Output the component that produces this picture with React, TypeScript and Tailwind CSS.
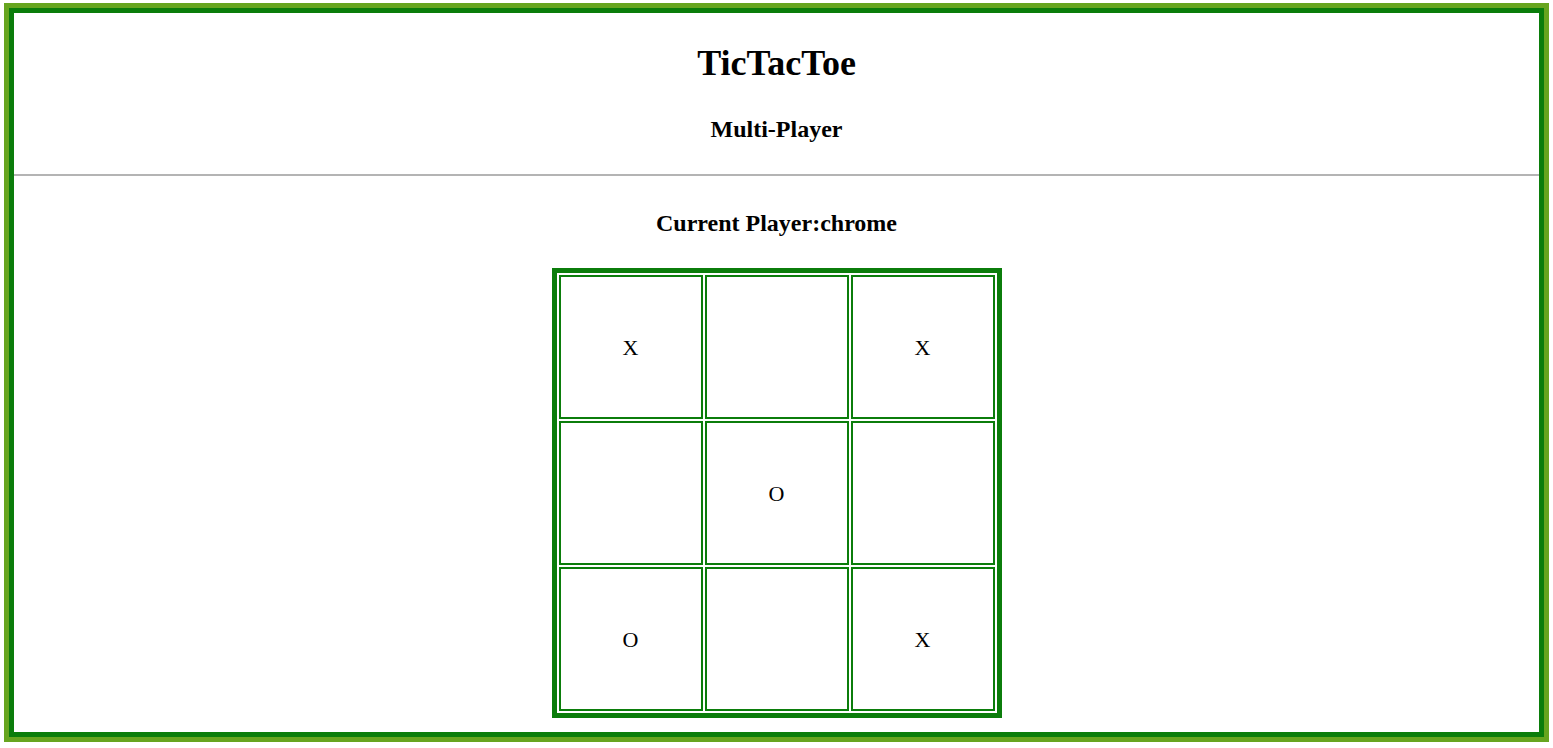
import React from 'react';

const board: string[] = ['X', '', 'X', '', 'O', '', 'O', '', 'X'];

function Cell({ value }: { value: string }) {
  return (
    <div className="flex h-[144px] w-[144px] items-center justify-center border-2 border-[#0b7d0b] text-[22px] text-black">
      {value}
    </div>
  );
}

export default function App() {
  return (
    <div className="min-h-[748px] bg-white pt-[3px] pr-[4px] pb-[6px] pl-[4px] font-['Liberation_Serif',serif] text-black">
      <div className="border-[5px] border-[#67a51f]">
        <div className="flex h-[729px] flex-col border-[5px] border-[#0b7d0b]">
          <header className="flex flex-col items-center pt-[32px] pb-[33px]">
            <h1 className="text-[36px] leading-none font-bold">TicTacToe</h1>
            <h3 className="mt-[36px] text-[24px] leading-none font-bold">Multi-Player</h3>
          </header>
          <div className="h-[2px] bg-[#b4b4b4]" />
          <main className="flex flex-col items-center">
            <h3 className="mt-[35px] text-[24px] leading-none font-bold">Current Player:chrome</h3>
            <div className="mt-[33px] border-[5px] border-[#0b7d0b] p-[2px]">
              <div className="grid grid-cols-3 gap-[2px]">
                {board.map((v, i) => (
                  <Cell key={i} value={v} />
                ))}
              </div>
            </div>
          </main>
        </div>
      </div>
    </div>
  );
}
